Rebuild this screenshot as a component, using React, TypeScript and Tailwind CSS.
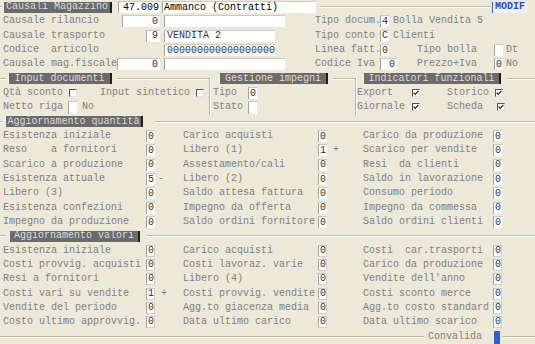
import type { ReactNode } from "react";

const LABEL = "shrink-0 whitespace-pre text-[#7f7f7f]";

function Row({ children, className = "" }: { children?: ReactNode; className?: string }) {
  return <div className={`flex h-[14.33px] items-center ${className}`}>{children}</div>;
}

function Bar({ children, className = "" }: { children: ReactNode; className?: string }) {
  return (
    <div
      className={`flex h-[11px] shrink-0 items-center justify-center whitespace-pre border-l border-l-[#f2f2f2] border-r-2 border-r-[#1e1e1e] bg-[#6b6b6b] leading-none text-[#dcdcdc] ${className}`}
    >
      {children}
    </div>
  );
}

function Line({ className = "" }: { className?: string }) {
  return <div className={`h-[2px] shrink-0 border-t border-t-[#bab7a6] border-b border-b-white ${className}`} />;
}

function Field({
  children,
  className = "",
  right,
}: {
  children?: ReactNode;
  className?: string;
  right?: boolean;
}) {
  return (
    <div
      className={`flex h-[12px] shrink-0 items-center whitespace-pre border-l border-t border-l-[#a2a2a2] border-t-[#c8c8c8] bg-white leading-none text-[#333] ${
        right ? "justify-end pr-[2px]" : "pl-[1px]"
      } ${className}`}
    >
      {children}
    </div>
  );
}

function Check({ on }: { on?: boolean }) {
  return (
    <div className="flex h-[8px] w-[8px] shrink-0 items-center justify-center border border-t-[#555] border-l-[#555] border-b-[#e0e0e0] border-r-[#e0e0e0] bg-white">
      {on && (
        <svg width="6" height="6" viewBox="0 0 6 6">
          <path d="M0.6 2.6 L2.3 4.4 L5.4 0.8" fill="none" stroke="#222" strokeWidth="1.3" />
        </svg>
      )}
    </div>
  );
}

type Item = { label: string; value: string; suffix?: string };

const qta: Item[][] = [
  [
    { label: "Esistenza iniziale", value: "0" },
    { label: "Carico acquisti", value: "0" },
    { label: "Carico da produzione", value: "0" },
  ],
  [
    { label: "Reso    a fornitori", value: "0" },
    { label: "Libero (1)", value: "1", suffix: "+" },
    { label: "Scarico per vendite", value: "0" },
  ],
  [
    { label: "Scarico a produzione", value: "0" },
    { label: "Assestamento/cali", value: "0" },
    { label: "Resi  da clienti", value: "0" },
  ],
  [
    { label: "Esistenza attuale", value: "5", suffix: "-" },
    { label: "Libero (2)", value: "0" },
    { label: "Saldo in lavorazione", value: "0" },
  ],
  [
    { label: "Libero (3)", value: "0" },
    { label: "Saldo attesa fattura", value: "0" },
    { label: "Consumo periodo", value: "0" },
  ],
  [
    { label: "Esistenza confezioni", value: "0" },
    { label: "Impegno da offerta", value: "0" },
    { label: "Impegno da commessa", value: "0" },
  ],
  [
    { label: "Impegno da produzione", value: "0" },
    { label: "Saldo ordini fornitore", value: "0" },
    { label: "Saldo ordini clienti", value: "0" },
  ],
];

const valori: Item[][] = [
  [
    { label: "Esistenza iniziale", value: "0" },
    { label: "Carico acquisti", value: "0" },
    { label: "Costi  car.trasporti", value: "0" },
  ],
  [
    { label: "Costi provvig. acquisti", value: "0" },
    { label: "Costi lavoraz. varie", value: "0" },
    { label: "Carico da produzione", value: "0" },
  ],
  [
    { label: "Resi a fornitori", value: "0" },
    { label: "Libero (4)", value: "0" },
    { label: "Vendite dell'anno", value: "0" },
  ],
  [
    { label: "Costi vari su vendite", value: "1", suffix: "+" },
    { label: "Costi provvig. vendite", value: "0" },
    { label: "Costi sconto merce", value: "0" },
  ],
  [
    { label: "Vendite del periodo", value: "0" },
    { label: "Agg.to giacenza media", value: "0" },
    { label: "Agg.to costo standard", value: "0" },
  ],
  [
    { label: "Costo ultimo approvvig.", value: "0" },
    { label: "Data ultimo carico", value: "0" },
    { label: "Data ultimo scarico", value: "0" },
  ],
];

function Suffix({ s, className }: { s?: string; className: string }) {
  return <span className={`${LABEL} ${className} ${s === "-" ? "pl-[3px]" : "pl-[6px]"}`}>{s ?? ""}</span>;
}

function ValueRow({ items, framed }: { items: Item[]; framed?: boolean }) {
  const box = framed ? "w-[9px] border-r border-b border-r-[#d0d0d0] border-b-[#d0d0d0]" : "w-[9px]";
  return (
    <Row>
      <span className={`${LABEL} w-[146px] pl-[3px]`}>{items[0].label}</span>
      <Field className={box}>{items[0].value}</Field>
      <Suffix s={items[0].suffix} className="w-[28px]" />
      <span className={`${LABEL} w-[135px]`}>{items[1].label}</span>
      <Field className={box}>{items[1].value}</Field>
      <Suffix s={items[1].suffix} className="w-[36px]" />
      <span className={`${LABEL} w-[130px]`}>{items[2].label}</span>
      <Field className={box}>{items[2].value}</Field>
    </Row>
  );
}

export default function App() {
  return (
    <div className="h-[344px] w-[535px] overflow-hidden bg-[#ECE9D8] font-['Liberation_Mono',monospace] text-[10px] leading-none">
      {/* testata */}
      <Row>
        <Line className="w-[2px]" />
        <Bar className="ml-[1px] w-[109px]">Causali Magazzino</Bar>
        <Field className="ml-[6px] w-[42px] pl-[4px] text-black">47.009</Field>
        <Field className="ml-[2px] w-[154px] text-black">Ammanco (Contratti)</Field>
        <Line className="ml-[4px] w-[170px]" />
        <div className="ml-[2px] flex h-[11px] w-[35px] items-center border-l border-l-[#3b55d8] bg-[#eef1f8] pl-[2px] font-bold text-[#2b45dc]">
          MODIF
        </div>
      </Row>
      <Row>
        <div className="flex w-[315px] items-center">
          <span className={`${LABEL} w-[122px] pl-[3px]`}>Causale rilancio</span>
          <Field right className="w-[38px]">0</Field>
          <Field className="ml-[4px] w-[121px]" />
        </div>
        <span className={`${LABEL} w-[65px]`}>Tipo docum.</span>
        <Field className="w-[9px]">4</Field>
        <span className={`${LABEL} ml-[4px]`}>Bolla Vendita 5</span>
      </Row>
      <Row>
        <div className="flex w-[315px] items-center">
          <span className={`${LABEL} w-[146px] pl-[3px]`}>Causale trasporto</span>
          <Field right className="w-[14px]">9</Field>
          <Field className="ml-[4px] w-[111px] pl-[2px]">VENDITA 2</Field>
        </div>
        <span className={`${LABEL} w-[65px]`}>Tipo conto</span>
        <Field className="w-[9px]">C</Field>
        <span className={`${LABEL} ml-[4px]`}>Clienti</span>
      </Row>
      <Row>
        <div className="flex w-[315px] items-center">
          <span className={`${LABEL} w-[164px] pl-[3px]`}>Codice  articolo</span>
          <Field className="w-[111px] pl-[2px]">000000000000000000</Field>
        </div>
        <span className={`${LABEL} w-[65px]`}>Linea fatt.</span>
        <Field className="w-[9px]">0</Field>
        <span className={`${LABEL} ml-[28px] w-[77px]`}>Tipo bolla</span>
        <Field className="w-[9px]" />
        <span className={`${LABEL} ml-[3px]`}>Dt</span>
      </Row>
      <Row>
        <div className="flex w-[315px] items-center">
          <span className={`${LABEL} w-[117px] pl-[3px]`}>Causale mag.fiscale</span>
          <Field right className="w-[43px]">0</Field>
          <Field className="ml-[4px] w-[121px]" />
        </div>
        <span className={`${LABEL} w-[65px]`}>Codice Iva</span>
        <Field right className="w-[17px]">0</Field>
        <span className={`${LABEL} ml-[20px] w-[77px]`}>Prezzo+Iva</span>
        <Field className="w-[9px]">0</Field>
        <span className={`${LABEL} ml-[3px]`}>No</span>
      </Row>

      {/* gruppi */}
      <div className="flex">
        <div className="flex w-[209px] flex-col">
          <Row>
            <Line className="w-[6px]" />
            <Bar className="ml-[2px] w-[104px]">Input documenti</Bar>
            <Line className="ml-[5px] flex-1" />
          </Row>
          <Row>
            <span className={`${LABEL} w-[69px] pl-[3px]`}>Qtà sconto</span>
            <Check />
            <span className={`${LABEL} ml-[23px] w-[96px]`}>Input sintetico</span>
            <Check />
          </Row>
          <Row>
            <span className={`${LABEL} w-[68px] pl-[3px]`}>Netto riga</span>
            <Field className="h-[13px] w-[9px]" />
            <span className={`${LABEL} ml-[5px]`}>No</span>
          </Row>
        </div>
        <div className="mt-[6px] w-[2px] border-l border-l-[#bab7a6] border-r border-r-white" />
        <div className="flex w-[144px] flex-col">
          <Row>
            <Bar className="ml-[8px] w-[109px]">Gestione impegni</Bar>
            <Line className="ml-[5px] flex-1" />
          </Row>
          <Row>
            <span className={`${LABEL} w-[37px] pl-[2px]`}>Tipo</span>
            <Field className="w-[9px]">0</Field>
          </Row>
          <Row>
            <span className={`${LABEL} w-[37px] pl-[2px]`}>Stato</span>
            <Field className="h-[13px] w-[9px]" />
          </Row>
        </div>
        <div className="mt-[6px] w-[2px] border-l border-l-[#bab7a6] border-r border-r-white" />
        <div className="flex flex-1 flex-col">
          <Row>
            <Bar className="ml-[6px] w-[138px]">Indicatori funzionali</Bar>
            <Line className="ml-[6px] flex-1" />
          </Row>
          <Row>
            <span className={`${LABEL} w-[55px]`}>Export</span>
            <Check on />
            <span className={`${LABEL} ml-[27px] w-[48px]`}>Storico</span>
            <Check on />
          </Row>
          <Row>
            <span className={`${LABEL} w-[55px]`}>Giornale</span>
            <Check on />
            <span className={`${LABEL} ml-[27px] w-[50px]`}>Scheda</span>
            <Check on />
          </Row>
        </div>
      </div>

      {/* quantità */}
      <Row>
        <Line className="w-[3px]" />
        <Bar className="ml-[2px] w-[138px]">Aggiornamento quantità</Bar>
        <Line className="ml-[12px] flex-1" />
      </Row>
      {qta.map((r, i) => (
        <ValueRow key={i} items={r} />
      ))}

      {/* valori */}
      <Row>
        <Line className="w-[6px]" />
        <Bar className="ml-[3px] w-[131px]">Aggiornamento valori</Bar>
        <Line className="ml-[7px] flex-1" />
      </Row>
      {valori.map((r, i) => (
        <ValueRow key={i} items={r} framed />
      ))}

      <Row>
        <Line className="w-[424px]" />
        <span className={`${LABEL} ml-[4px] w-[66px]`}>Convalida</span>
        <div className="h-[13px] w-[6px] shrink-0 self-end bg-[#2f5fd0]" />
        <Line className="ml-[3px] flex-1" />
      </Row>
    </div>
  );
}
